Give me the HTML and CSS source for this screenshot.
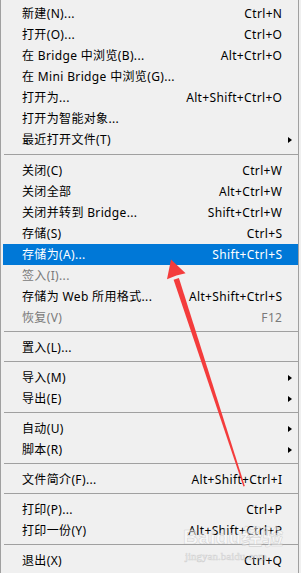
FILE: index.html
```html
<!DOCTYPE html>
<html lang="zh-CN">
<head>
  <meta charset="UTF-8" />
  <meta name="viewport" content="width=device-width, initial-scale=1.0" />
  <title>文件菜单</title>
  <link rel="stylesheet" href="styles.css">
</head>
<body>
  <div class="menu">
    <div class="item"><span>新建(N)...</span><span class="key">Ctrl+N</span></div>
    <div class="item"><span>打开(O)...</span><span class="key">Ctrl+O</span></div>
    <div class="item"><span>在 Bridge 中浏览(B)...</span><span class="key">Alt+Ctrl+O</span></div>
    <div class="item"><span>在 Mini Bridge 中浏览(G)...</span><span class="key"></span></div>
    <div class="item"><span>打开为...</span><span class="key">Alt+Shift+Ctrl+O</span></div>
    <div class="item"><span>打开为智能对象...</span><span class="key"></span></div>
    <div class="item"><span>最近打开文件(T)</span><span class="key"></span><i class="sub"></i></div>
    <div class="sep first"></div>
    <div class="item"><span>关闭(C)</span><span class="key">Ctrl+W</span></div>
    <div class="item"><span>关闭全部</span><span class="key">Alt+Ctrl+W</span></div>
    <div class="item"><span>关闭并转到 Bridge...</span><span class="key">Shift+Ctrl+W</span></div>
    <div class="item"><span>存储(S)</span><span class="key">Ctrl+S</span></div>
    <div class="item active"><span>存储为(A)...</span><span class="key">Shift+Ctrl+S</span></div>
    <div class="item off"><span>签入(I)...</span><span class="key"></span></div>
    <div class="item"><span>存储为 Web 所用格式...</span><span class="key">Alt+Shift+Ctrl+S</span></div>
    <div class="item off"><span>恢复(V)</span><span class="key">F12</span></div>
    <div class="sep"></div>
    <div class="item"><span>置入(L)...</span><span class="key"></span></div>
    <div class="sep"></div>
    <div class="item"><span>导入(M)</span><span class="key"></span><i class="sub"></i></div>
    <div class="item"><span>导出(E)</span><span class="key"></span><i class="sub"></i></div>
    <div class="sep"></div>
    <div class="item"><span>自动(U)</span><span class="key"></span><i class="sub"></i></div>
    <div class="item"><span>脚本(R)</span><span class="key"></span><i class="sub"></i></div>
    <div class="sep"></div>
    <div class="item"><span>文件简介(F)...</span><span class="key">Alt+Shift+Ctrl+I</span></div>
    <div class="sep"></div>
    <div class="item"><span>打印(P)...</span><span class="key">Ctrl+P</span></div>
    <div class="item"><span>打印一份(Y)</span><span class="key">Alt+Shift+Ctrl+P</span></div>
    <div class="sep"></div>
    <div class="item"><span>退出(X)</span><span class="key">Ctrl+Q</span></div>
  </div>

  <!-- red pointer drawn over the menu -->
  <svg class="arrow" viewBox="0 0 301 573" width="301" height="573">
    <polygon points="173.6,279.8 178.9,278.0 244.8,486 243.4,486.4" fill="#f43c3c" />
    <polygon points="171,259.5 185.6,273.2 176.4,275.4 167,279.3" fill="#f43c3c" />
  </svg>

  <div class="watermark">
    <div class="wm-logo">Baidu经验</div>
    <div class="wm-url">jingyan.baidu.com</div>
  </div>
</body>
</html>
```

FILE: styles.css
```css
* {
  box-sizing: border-box;
  margin: 0;
  padding: 0;
}

body {
  width: 301px;
  height: 573px;
  background: #f0f0f0;
  font-family: "Noto Sans", "Noto Sans CJK SC", sans-serif;
  font-size: 12px;
  letter-spacing: 0.35px;
  color: #000;
  position: relative;
  overflow: hidden;
}

.menu {
  width: 299px;
  height: 573px;
  border-left: 1px solid #a0a0a0;
  border-right: 1px solid #a0a0a0;
  padding: 3px 0 0 2px;
}

.item {
  display: grid;
  grid-template-columns: 1fr auto 16px;
  align-items: center;
  height: 21px;
  padding-left: 19px;
  line-height: 21px;
  white-space: nowrap;
}

.item .key {
  text-align: right;
  margin-right: -0.35px;
}

.item.active {
  background: #0078d7;
  color: #fff;
}

.item.off {
  color: #7a7a7a;
}

.sub {
  grid-column: 3;
  width: 0;
  height: 0;
  margin-left: 6px;
  border-top: 3.5px solid transparent;
  border-bottom: 3.5px solid transparent;
  border-left: 4px solid #000;
}

.sep {
  height: 9px;
  padding-top: 3px;
  margin-left: 1px;
}

.sep.first {
  height: 10px;
  padding-top: 4px;
}

.sep::after {
  content: "";
  display: block;
  height: 1px;
  background: #a0a0a0;
}

.arrow {
  position: absolute;
  top: 0;
  left: 0;
  pointer-events: none;
}

.watermark {
  position: absolute;
  left: 183px;
  top: 524px;
  white-space: nowrap;
  letter-spacing: 0;
  color: rgba(255, 255, 255, 0.5);
  -webkit-text-stroke: 0.6px rgba(150, 150, 150, 0.35);
  pointer-events: none;
}

.wm-logo {
  font-family: "Liberation Sans", "Noto Sans CJK SC", sans-serif;
  font-size: 21px;
  font-weight: bold;
  line-height: 26px;
}

.wm-url {
  font-family: "Liberation Serif", serif;
  font-size: 11px;
  line-height: 12px;
  margin-left: 2px;
}
```
